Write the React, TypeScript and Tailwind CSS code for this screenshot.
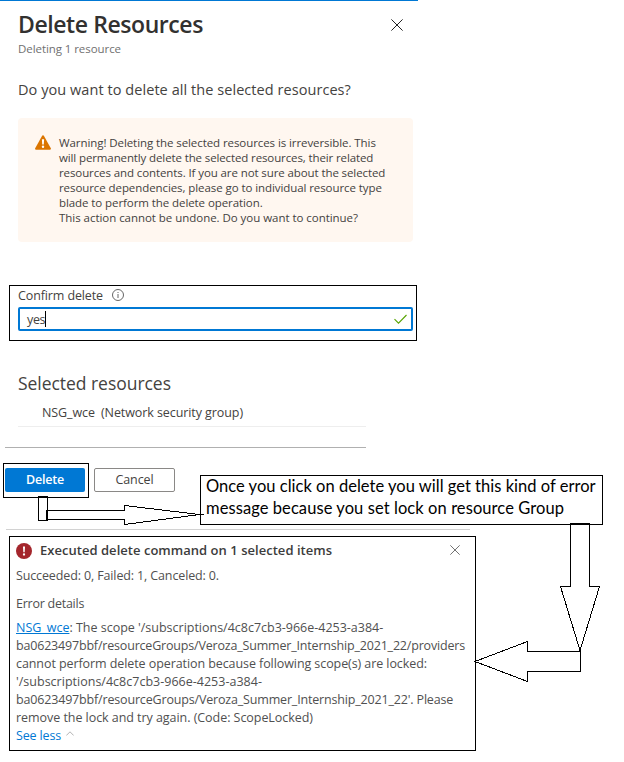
function CloseIcon({ size, color }: { size: number; color: string }) {
  return (
    <svg width={size} height={size} viewBox="0 0 12 12" fill="none" stroke={color} strokeWidth="1">
      <path d="M0.4 0.4 11.6 11.6M11.6 0.4 0.4 11.6" />
    </svg>
  );
}

function WarningIcon() {
  return (
    <svg className="mt-px h-[15px] w-4 shrink-0" viewBox="0 0 16 15">
      <path d="M8 0.3c.5 0 .8.3 1 .6l6.800 12.300c.4.8 0 1.500-.9 1.500H1.100c-.9 0-1.300-.7-.9-1.500L7 .9c.2-.3.5-.6 1-.6Z" fill="#db7500" />
      <path d="M6.900 4.300h2.200l-.3 5.200H7.200Z" fill="#fff" />
      <circle cx="8" cy="11.700" r="1.200" fill="#fff" />
    </svg>
  );
}

function Arrows() {
  return (
    <svg
      className="pointer-events-none absolute inset-0"
      width="624"
      height="762"
      fill="none"
      stroke="#000"
      strokeWidth="1"
      shapeRendering="crispEdges"
    >
      <path d="M38.500 496.500h9v24h-9Z" />
      <path d="M46.500 510.500H124.500V505.500L199.500 514.500H203.500H199.500L124.500 524.500V519.500H46.500Z" />
      <path d="M570.500 523.500H589.500V586.500H599.500L580 650.500L560.500 586.500H570.500Z" />
      <path d="M580.500 651.500H527.500V641.500L475 661.500L527.500 681.500V671.500H580.500Z" />
    </svg>
  );
}

function Panel() {
  return (
    <div className="w-[418px] border-t border-[#0078d4]">
      <header className="flex justify-between pt-2 pr-[15px] pl-[18px]">
        <div>
          <h1 className="h-[31px] text-[23px] leading-[30px] font-semibold tracking-[-0.42px] text-[#323130]">
            Delete Resources
          </h1>
          <p className="text-[11.5px] leading-[18px] tracking-[-0.07px] text-[#707070]">Deleting 1 resource</p>
        </div>
        <div className="pt-[10px]">
          <CloseIcon size={12} color="#222" />
        </div>
      </header>

      <p className="mt-[22px] pl-[18px] text-[14.5px] leading-5 tracking-[0.06px]">
        Do you want to delete all the selected resources?
      </p>

      <div className="mt-[18px] ml-[18px] flex h-[124px] w-[395px] gap-2 rounded-sm bg-[#fff7f0] pt-4 pl-[17px]">
        <WarningIcon />
        <div className="pt-px text-[11.5px] leading-[15px] whitespace-nowrap">
          <p className="tracking-[-0.08px]">Warning! Deleting the selected resources is irreversible. This</p>
          <p className="tracking-[-0.12px]">will permanently delete the selected resources, their related</p>
          <p className="tracking-[-0.1px]">resources and contents. If you are not sure about the selected</p>
          <p className="tracking-[-0.08px]">resource dependencies, please go to individual resource type</p>
          <p className="tracking-[-0.08px]">blade to perform the delete operation.</p>
          <p className="tracking-[-0.04px]">This action cannot be undone. Do you want to continue?</p>
        </div>
      </div>

      <div className="mt-[43px] ml-[9px] h-[56px] w-[408px] border border-black pl-2">
        <div className="flex h-[21px] items-start gap-[9px]">
          <span className="pt-px text-[12.5px] leading-[18px] tracking-[-0.12px]">Confirm delete</span>
          <svg className="mt-[3px]" width="12" height="12" viewBox="0 0 12 12" fill="none" stroke="#666">
            <circle cx="6" cy="6" r="5.500" />
            <path d="M6 5v4M6 3v1" />
          </svg>
        </div>
        <div className="flex h-6 w-[395px] items-center justify-between rounded-[2px] border-2 border-[#0078d4] pr-1 pl-[7px]">
          <span className="flex items-center">
            <span className="pt-[2px] text-[12.5px] leading-[18px] tracking-[-0.35px]">yes</span>
            <span className="h-4 w-px bg-black" />
          </span>
          <svg width="13" height="10" viewBox="0 0 13 10" fill="none" stroke="#57a300" strokeWidth="1.100">
            <path d="M0.500 5.200 4.500 9.200 12.500 1" />
          </svg>
        </div>
      </div>

      <section className="mt-[30px]">
        <h2 className="pl-[18px] text-[17.5px] leading-6 tracking-[-0.04px]">Selected resources</h2>
        <div className="mt-2 ml-[18px] flex h-[24px] w-[348px] gap-[6px] border-b border-[#eee] pt-px pl-6 text-[12.5px] leading-[18px] tracking-[-0.08px]">
          <span>NSG_wce</span>
          <span>(Network security group)</span>
        </div>
      </section>

      <div className="mt-5 ml-[5px] h-px w-[361px] bg-[#b0b0b0]" />

      <div className="mt-[15px] ml-[3px] flex gap-[5px]">
        <div className="h-[35px] w-[86px] border border-black pt-1 pl-px">
          <button className="block h-6 w-20 rounded-[2px] bg-[#0078d4] pb-px text-[12.5px] leading-[18px] font-semibold tracking-[-0.2px] text-white">
            Delete
          </button>
        </div>
        <button className="mt-[5px] h-6 w-[81px] rounded-[2px] border border-[#8a8886] text-[12.5px] leading-[18px] tracking-[-0.1px]">
          Cancel
        </button>
      </div>
    </div>
  );
}

function ErrorNotice() {
  return (
    <div className="mt-[6px] ml-[9px] h-[215px] w-[467px] border border-black pl-[6px] text-[12.5px] leading-[18px] whitespace-nowrap text-[#505050]">
      <div className="flex items-start pt-1">
        <svg className="mt-[2px]" width="16" height="16" viewBox="0 0 16 16">
          <circle cx="8" cy="8" r="8" fill="#a4262c" />
          <path d="M7 3.500h2l-.3 5.700H7.300Z" fill="#fff" />
          <circle cx="8" cy="11.500" r="1.150" fill="#fff" />
        </svg>
        <h3 className="ml-2 w-[410px] text-[13px] font-semibold tracking-[0.03px] text-[#3c3c3c]">
          Executed delete command on 1 selected items
        </h3>
        <div className="pt-1">
          <CloseIcon size={10} color="#555" />
        </div>
      </div>
      <p className="mt-2 tracking-[-0.13px]">Succeeded: 0, Failed: 1, Canceled: 0.</p>
      <p className="mt-[10px] tracking-[-0.25px]">Error details</p>
      <div className="mt-[6px]">
        <p className="tracking-[-0.01px]">
          <a className="text-[#0078d4] underline">NSG_wce</a>: The scope '/subscriptions/4c8c7cb3-966e-4253-a384-
        </p>
        <p className="tracking-[-0.186px]">ba0623497bbf/resourceGroups/Veroza_Summer_Internship_2021_22/providers</p>
        <p className="tracking-[-0.08px]">cannot perform delete operation because following scope(s) are locked:</p>
        <p className="tracking-[0.01px]">'/subscriptions/4c8c7cb3-966e-4253-a384-</p>
        <p className="tracking-[-0.17px]">ba0623497bbf/resourceGroups/Veroza_Summer_Internship_2021_22'. Please</p>
        <p className="tracking-[-0.05px]">remove the lock and try again. (Code: ScopeLocked)</p>
        <div className="flex items-start gap-[5px] text-[#0078d4]">
          <span className="tracking-[-0.15px]">See less</span>
          <svg className="mt-1" width="8" height="5" viewBox="0 0 8 5" fill="none" stroke="#aaa" strokeWidth="0.900">
            <path d="M0.300 4.500 4 0.800 7.700 4.500" />
          </svg>
        </div>
      </div>
    </div>
  );
}

export default function App() {
  return (
    <main className="relative h-[762px] w-[624px] overflow-hidden bg-white font-['Open_Sans','Noto_Sans',sans-serif] text-[#444240]">
      <Panel />
      <div className="mt-[31px] ml-[6px] h-px w-[464px] bg-[#d2d2d2]" />
      <ErrorNotice />
      <div className="absolute top-[475px] left-[200px] h-[50px] w-[403px] border border-black bg-white pl-[5px] font-[Lato,sans-serif] text-[16.5px] leading-[22px] whitespace-nowrap text-black">
        <p className="-mt-px tracking-[0.02px]">Once you click on delete you will get this kind of error</p>
        <p className="tracking-[0.08px]">message because you set lock on resource Group</p>
      </div>
      <Arrows />
    </main>
  );
}
